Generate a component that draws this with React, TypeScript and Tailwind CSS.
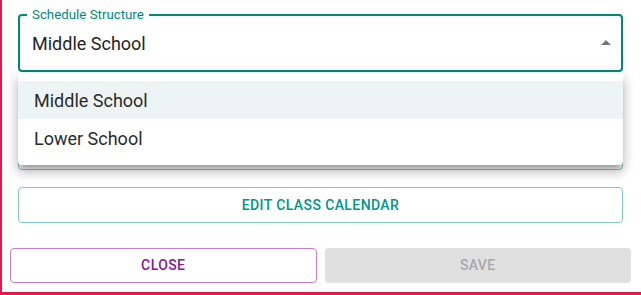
import React from 'react';

const options = ['Middle School', 'Lower School'];

export default function App() {
  return (
    <div className="relative w-[641px] h-[295px] overflow-hidden bg-white border-l-[2px] border-b-[3px] border-[#e5174b] font-['Roboto',sans-serif]">
      <div className="pl-[16px] pr-[18px] pt-[14px]">
        {/* Schedule Structure select */}
        <div className="relative h-[58px] rounded-[4px] border-2 border-[#00897b] flex items-center pl-[12px] pr-[3px]">
          <span className="absolute -top-[10px] left-[7px] bg-white px-[5px] text-[13.3px] leading-[17px] text-[#00897b]">
            Schedule Structure
          </span>
          <span className="flex-1 text-[18px] text-[#1f1f1f]">Middle School</span>
          <svg width="24" height="24" viewBox="0 0 24 24" className="fill-[#757575]">
            <path d="M7 14l5-5 5 5z" />
          </svg>
        </div>

        {/* field hidden under the menu */}
        <div className="mt-[40px] h-[58px] rounded-[4px] border border-[#7fc9c0]" />

        <button className="mt-[17px] w-full h-[36px] rounded-[4px] border border-[#7fc9c0] text-[14px] font-medium tracking-[0.4px] text-[#00968a] uppercase">
          Edit Class Calendar
        </button>
      </div>

      <div className="px-[8px] mt-[25px] grid grid-cols-2 gap-[8px] pr-[10px]">
        <button className="h-[35px] rounded-[4px] border border-[#c57ccc] text-[14px] font-medium tracking-[0.4px] text-[#8b168f] uppercase">
          Close
        </button>
        <button className="h-[35px] rounded-[4px] bg-[#e0e0e0] text-[14px] font-medium tracking-[0.4px] text-[#a8a8a8] uppercase">
          Save
        </button>
      </div>

      {/* open dropdown menu */}
      <div className="absolute left-[16px] top-[73px] w-[605px] bg-white rounded-[4px] py-[8px] shadow-[0px_5px_5px_-3px_rgba(0,0,0,0.25),0px_8px_10px_1px_rgba(0,0,0,0.14),0px_3px_14px_2px_rgba(0,0,0,0.12)]">
        {options.map((o, i) => (
          <div
            key={o}
            className={`h-[38px] flex items-center px-[16px] text-[18px] text-[#2b2b2b] ${i === 0 ? 'bg-[#edf5f4]' : ''}`}
          >
            {o}
          </div>
        ))}
      </div>
    </div>
  );
}
